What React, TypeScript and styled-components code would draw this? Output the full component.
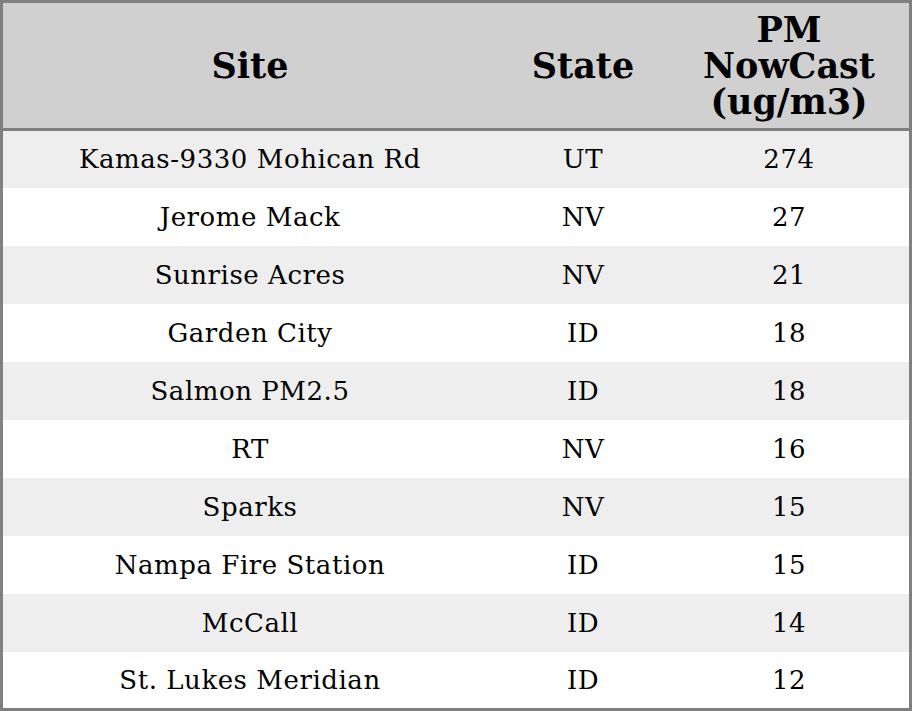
import React from "react";
import styled, { createGlobalStyle } from "styled-components";

const GlobalStyle = createGlobalStyle`
  html, body {
    margin: 0;
    padding: 0;
    background: white;
  }
`;

const Table = styled.table`
  width: 912px;
  height: 711px;
  border: 3px solid #808080;
  border-collapse: collapse;
  box-sizing: border-box;
  font-family: "DejaVu Serif", serif;
  color: #000;
  table-layout: fixed;
`;

const HeadCell = styled.th<{ w: number }>`
  width: ${(props) => props.w}px;
  height: 125px;
  padding: 0;
  background: #d0d0d0;
  border-bottom: 3px solid #808080;
  font-size: 35px;
  font-weight: 700;
  line-height: 36px;
  text-align: center;
  vertical-align: middle;
`;

const Row = styled.tr<{ shaded: boolean }>`
  height: 57.7px;
  background: ${(props) => (props.shaded ? "#eeeeee" : "#ffffff")};
`;

const Cell = styled.td`
  padding: 0;
  font-size: 26px;
  text-align: center;
  vertical-align: middle;
  letter-spacing: 0.55px;
`;

const rows = [
  ["Kamas-9330 Mohican Rd", "UT", "274"],
  ["Jerome Mack", "NV", "27"],
  ["Sunrise Acres", "NV", "21"],
  ["Garden City", "ID", "18"],
  ["Salmon PM2.5", "ID", "18"],
  ["RT", "NV", "16"],
  ["Sparks", "NV", "15"],
  ["Nampa Fire Station", "ID", "15"],
  ["McCall", "ID", "14"],
  ["St. Lukes Meridian", "ID", "12"],
];

const App = () => {
  return (
    <>
      <GlobalStyle />
      <Table>
        <thead>
          <tr>
            <HeadCell w={494}>Site</HeadCell>
            <HeadCell w={172}>State</HeadCell>
            <HeadCell w={240}>
              PM
              <br />
              NowCast
              <br />
              (ug/m3)
            </HeadCell>
          </tr>
        </thead>
        <tbody>
          {rows.map((r, i) => (
            <Row key={i} shaded={i % 2 === 0}>
              <Cell>{r[0]}</Cell>
              <Cell>{r[1]}</Cell>
              <Cell>{r[2]}</Cell>
            </Row>
          ))}
        </tbody>
      </Table>
    </>
  );
};

export default App;
